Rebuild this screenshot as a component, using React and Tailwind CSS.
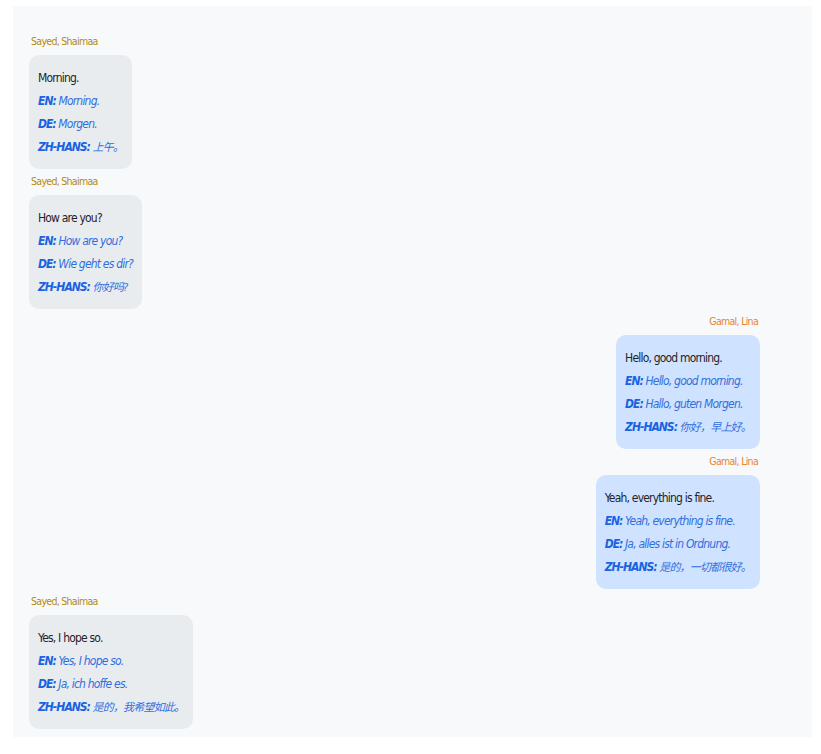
import React from 'react';

const messages = [
  {
    from: 'Sayed, Shaimaa',
    mine: false,
    text: 'Morning.',
    tr: [['EN', 'Morning.'], ['DE', 'Morgen.'], ['ZH-HANS', '上午。']],
  },
  {
    from: 'Sayed, Shaimaa',
    mine: false,
    text: 'How are you?',
    tr: [['EN', 'How are you?'], ['DE', 'Wie geht es dir?'], ['ZH-HANS', '你好吗?']],
  },
  {
    from: 'Gamal, Lina',
    mine: true,
    text: 'Hello, good morning.',
    tr: [['EN', 'Hello, good morning.'], ['DE', 'Hallo, guten Morgen.'], ['ZH-HANS', '你好，早上好。']],
  },
  {
    from: 'Gamal, Lina',
    mine: true,
    text: 'Yeah, everything is fine.',
    tr: [['EN', 'Yeah, everything is fine.'], ['DE', 'Ja, alles ist in Ordnung.'], ['ZH-HANS', '是的，一切都很好。']],
  },
  {
    from: 'Sayed, Shaimaa',
    mine: false,
    text: 'Yes, I hope so.',
    tr: [['EN', 'Yes, I hope so.'], ['DE', 'Ja, ich hoffe es.'], ['ZH-HANS', '是的，我希望如此。']],
  },
];

const Message = ({ msg }) => (
  <div className={`flex flex-col ${msg.mine ? 'items-end' : 'items-start'}`}>
    <div
      className={`h-4 text-[10.5px] leading-4 tracking-[-0.7px] px-0.5 ${msg.mine ? 'text-[#e8832f]' : 'text-[#b08a12]'}`}
    >
      {msg.from}
    </div>
    <div
      className={`mt-1.5 rounded-[10px] px-[9px] pt-[12px] pb-[10px] text-[12px] leading-[23px] tracking-[-0.8px] ${
        msg.mine ? 'bg-[#cfe2ff]' : 'bg-[#e9ecef]'
      }`}
    >
      <div className="text-[#1f2328]">{msg.text}</div>
      {msg.tr.map(([lang, t]) => (
        <div key={lang} className="italic text-[#2f6fde]">
          <span className="font-bold text-[#1a62e0] tracking-[-1px]">{lang}:</span>{' '}
          <span className={lang === 'ZH-HANS' ? 'text-[11px]' : ''}>{t}</span>
        </div>
      ))}
    </div>
  </div>
);

export default function App() {
  return (
    <div
      className="min-h-screen bg-white pt-1.5 pl-[13px] pr-[9px] pb-4"
      style={{ fontFamily: '"DejaVu Sans Condensed", "Liberation Sans", "Noto Sans CJK SC", sans-serif' }}
    >
      <div className="bg-[#f8f9fa] h-[731px] pt-[27px] pl-4 pr-[52px] flex flex-col gap-1">
        {messages.map((m, i) => (
          <Message key={i} msg={m} />
        ))}
      </div>
    </div>
  );
}
